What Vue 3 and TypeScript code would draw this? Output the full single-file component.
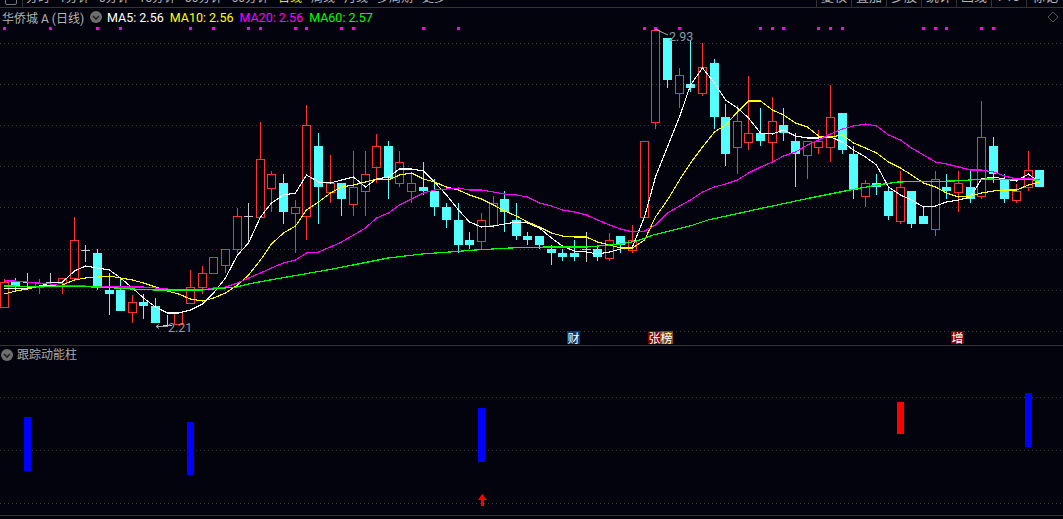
<script setup lang="ts">
type Candle = [number, number, number, number, number, 'r' | 'c' | 'd']

const periods = ['分时', '1分钟', '5分钟', '15分钟', '30分钟', '60分钟', '日线', '周线', '月线', '多周期', '更多']
const tools = ['复权', '叠加', '多股', '统计', '画线', 'F10', '标记']

const legend = [
  { text: 'MA5: 2.56', cls: 'white' },
  { text: 'MA10: 2.56', cls: 'yellow' },
  { text: 'MA20: 2.56', cls: 'magenta' },
  { text: 'MA60: 2.57', cls: 'green' },
]

// [column, high, top of body (cross bar for doji), bottom of body, low, kind]
const candles: Candle[] = [
  [4, 279, 282, 307, 307, 'r'], [15, 278, 282, 286, 290, 'c'], [27, 273, 282, 282, 286, 'd'],
  [39, 279, 283, 287, 294, 'r'], [50, 273, 282, 282, 286, 'd'], [62, 278, 278, 283, 294, 'r'],
  [74, 217, 240, 278, 278, 'r'], [85, 245, 250, 250, 261, 'd'], [97, 249, 253, 286, 290, 'c'],
  [109, 273, 290, 294, 315, 'c'], [120, 278, 290, 311, 311, 'c'], [132, 295, 302, 312, 323, 'r'],
  [143, 294, 302, 306, 319, 'c'], [155, 298, 306, 323, 323, 'c'], [167, 315, 325, 325, 325, 'd'],
  [178, 312, 312, 324, 324, 'r'], [190, 270, 287, 303, 303, 'r'], [202, 266, 273, 287, 294, 'r'],
  [213, 257, 257, 273, 273, 'r'], [225, 249, 249, 265, 273, 'r'], [237, 208, 216, 249, 253, 'r'],
  [248, 203, 216, 216, 243, 'd'], [260, 122, 159, 217, 217, 'r'], [271, 171, 174, 188, 212, 'r'],
  [283, 174, 183, 212, 224, 'c'], [295, 200, 207, 213, 253, 'r'], [306, 105, 125, 216, 240, 'r'],
  [318, 133, 146, 187, 224, 'c'], [330, 155, 183, 192, 203, 'r'], [341, 183, 183, 199, 216, 'c'],
  [353, 151, 187, 204, 216, 'r'], [365, 151, 174, 191, 216, 'r'], [376, 134, 146, 167, 183, 'r'],
  [388, 141, 146, 178, 199, 'c'], [399, 151, 162, 183, 187, 'r'], [411, 172, 183, 191, 203, 'r'],
  [423, 162, 187, 191, 195, 'c'], [434, 179, 191, 207, 216, 'c'], [446, 203, 207, 220, 228, 'c'],
  [458, 203, 220, 245, 253, 'c'], [469, 232, 240, 245, 249, 'c'], [481, 213, 220, 241, 249, 'r'],
  [493, 196, 203, 225, 228, 'r'], [504, 191, 199, 212, 232, 'c'], [516, 203, 220, 236, 240, 'c'],
  [527, 232, 236, 240, 245, 'c'], [539, 236, 236, 245, 249, 'c'], [551, 245, 249, 253, 265, 'c'],
  [562, 249, 253, 257, 261, 'c'], [574, 240, 253, 257, 261, 'c'], [586, 232, 249, 249, 261, 'd'],
  [597, 245, 249, 257, 261, 'c'], [609, 233, 240, 258, 261, 'r'], [620, 236, 236, 245, 253, 'c'],
  [632, 225, 240, 250, 253, 'r'], [644, 141, 141, 217, 217, 'r'], [655, 30, 30, 122, 129, 'r'],
  [667, 38, 38, 80, 88, 'c'], [679, 68, 75, 93, 108, 'r'], [690, 40, 84, 88, 92, 'c'],
  [702, 43, 67, 93, 96, 'r'], [714, 59, 63, 117, 129, 'c'], [725, 104, 117, 154, 166, 'c'],
  [737, 105, 121, 147, 174, 'r'], [748, 76, 133, 142, 150, 'r'], [760, 108, 133, 141, 146, 'c'],
  [772, 97, 121, 142, 162, 'r'], [783, 108, 125, 133, 141, 'c'], [795, 133, 141, 154, 187, 'c'],
  [807, 141, 141, 155, 179, 'r'], [818, 130, 141, 147, 154, 'r'], [830, 85, 117, 147, 162, 'r'],
  [842, 113, 113, 150, 154, 'c'], [853, 146, 154, 190, 199, 'c'], [865, 180, 183, 196, 207, 'r'],
  [876, 174, 183, 187, 195, 'c'], [888, 187, 191, 216, 220, 'c'], [900, 171, 187, 221, 224, 'r'],
  [911, 191, 191, 224, 228, 'c'], [923, 207, 216, 224, 224, 'c'], [935, 171, 179, 229, 236, 'r'],
  [946, 174, 187, 191, 199, 'c'], [958, 171, 183, 192, 212, 'r'], [970, 171, 187, 199, 203, 'c'],
  [981, 101, 137, 196, 199, 'r'], [993, 137, 146, 174, 183, 'c'], [1004, 174, 179, 199, 203, 'c'],
  [1016, 184, 191, 200, 203, 'r'], [1028, 151, 170, 187, 191, 'r'], [1039, 170, 170, 187, 187, 'c'],
]

const ma5 = [288,289,288,286,283,282,271,266,268,270,278,288,298,307,313,313,310,304,293,278,255,243,217,203,195,193,175,182,183,180,177,187,179,177,169,169,171,182,195,210,222,227,226,224,222,223,228,238,246,251,252,254,252,249,247,217,177,147,117,85,68,83,100,108,118,133,134,130,136,138,138,137,142,150,157,165,187,195,200,207,206,202,200,197,179,177,179,181,174,183]
const ma10 = [294,291,289,286,286,285,280,278,277,276,278,280,283,287,291,294,299,301,298,293,285,275,260,244,233,226,210,202,193,187,185,182,179,180,175,173,179,182,187,190,195,199,205,211,216,222,227,233,236,237,237,242,245,248,248,240,217,200,180,163,147,132,125,112,101,101,110,115,123,127,136,137,135,143,148,153,162,168,175,183,187,193,197,196,193,191,190,190,185,182]
const ma20 = [281,281,282,283,284,286,286,286,287,287,287,287,287,288,289,290,290,290,288,287,283,278,273,268,263,260,253,252,247,242,235,228,218,213,205,199,193,190,189,188,190,190,192,194,195,197,203,206,210,212,215,220,225,229,232,231,225,213,206,200,192,187,184,180,173,167,162,156,152,145,140,134,129,126,124,126,135,140,148,155,162,164,167,170,170,172,176,179,178,180]

const line = (values: number[]) => values.map((y, i) => `${candles[i][0] + 0.5},${y}`).join(' ')
const maLines = [
  { points: line(ma5), color: '#ffffff', width: 1.1 },
  { points: line(ma10), color: '#ffff00', width: 1.1 },
  { points: line(ma20), color: '#ff00ff', width: 1.1 },
  {
    points:
      '4,286 100,287 132,289 155,290 202,290 213,289 225,288 237,287 248,284 270,280 327,270 353,265 388,258 422,254 450,252 475,250 510,248 547,247 587,247 620,244 637,241 653,235 690,226 708,220 763,208 810,198 850,190 877,185 898,182 953,181 987,179 1038,180',
    color: '#00ff00',
    width: 1.2,
  },
]

const marks = [3, 49, 96, 119, 189, 212, 247, 259, 294, 305, 340, 352, 422, 457, 643, 654, 678, 759, 771, 782, 817, 829, 841, 922, 934, 945, 980, 992]
const mainGrid = [43, 84, 125, 166, 207, 249, 290, 331]
const subGrid = [397, 450, 503]
const bars = [
  { x: 24, y: 417, h: 54, color: '#0000ff' },
  { x: 187, y: 422, h: 53, color: '#0000ff' },
  { x: 478, y: 408, h: 54, color: '#0000ff' },
  { x: 897, y: 402, h: 32, color: '#ff0000' },
  { x: 1025, y: 393, h: 54, color: '#0000ff' },
]
</script>

<template>
  <div class="screen">
    <header class="toolbar">
      <div class="home"><span class="home-box"></span></div>
      <nav class="periods">
        <span v-for="p in periods" :key="p" :class="{ active: p === '日线' }">{{ p }}</span>
      </nav>
      <nav class="tools">
        <span v-for="t in tools" :key="t">{{ t }}</span>
      </nav>
    </header>

    <section class="main-pane">
      <svg class="canvas" viewBox="0 8 1063 337" width="1063" height="337">
        <line
          v-for="y in mainGrid" :key="y" x1="0" x2="1063" :y1="y + 0.5" :y2="y + 0.5"
          class="grid"
        />
        <rect v-for="x in marks" :key="x" :x="x" y="27" width="3" height="3" fill="#ff00ff" />
        <g v-for="c in candles" :key="c[0]" shape-rendering="crispEdges">
          <template v-if="c[5] === 'd'">
            <rect :x="c[0]" :y="c[1]" width="1" :height="c[4] - c[1] + 1" fill="#c8c8c8" />
            <rect :x="c[0] - 4" :y="c[2]" width="9" height="1" fill="#c8c8c8" />
          </template>
          <template v-else-if="c[5] === 'r'">
            <rect :x="c[0]" :y="c[1]" width="1" :height="c[2] - c[1]" fill="#ff3232" />
            <rect :x="c[0]" :y="c[3]" width="1" :height="c[4] - c[3]" fill="#ff3232" />
            <rect
              :x="c[0] - 3.5" :y="c[2] + 0.5" width="8" :height="c[3] - c[2]"
              fill="none" stroke="#ff3232"
            />
          </template>
          <template v-else>
            <rect :x="c[0]" :y="c[1]" width="1" :height="c[4] - c[1]" fill="#54ffff" />
            <rect :x="c[0] - 4" :y="c[2]" width="9" :height="c[3] - c[2]" fill="#54ffff" />
          </template>
        </g>
        <polyline
          v-for="m in maLines" :key="m.color" :points="m.points" :stroke="m.color"
          :stroke-width="m.width" fill="none" shape-rendering="crispEdges"
        />
        <path d="M168 326.5H156M156 326.5l3-2M156 326.5l3 2" class="leader" />
        <text x="168" y="332" class="price">2.21</text>
        <path d="M655 30.5l2-1.5 2 1.5M657 30l11 5" class="leader" />
        <text x="669" y="41" class="price">2.93</text>
        <path d="M1053 12l5 5-5 5-5-5z" fill="none" stroke="#555" />
      </svg>

      <div class="legend">
        <span class="title">华侨城 A (日线)</span>
        <span class="chevron">
          <svg viewBox="0 0 12 12" width="12" height="12">
            <path d="M3 5l3 3 3-3" fill="none" stroke="#222" stroke-width="1.6" />
          </svg>
        </span>
        <span v-for="l in legend" :key="l.text" class="ma" :class="l.cls">{{ l.text }}</span>
      </div>

      <span class="badge blue cai">财</span>
      <span class="badge red zhang">张</span>
      <span class="badge amber bang">榜</span>
      <span class="badge red zeng">增</span>
    </section>

    <section class="sub-pane">
      <svg class="canvas" viewBox="0 346 1063 169" width="1063" height="169">
        <line
          v-for="y in subGrid" :key="y" x1="0" x2="1063" :y1="y + 0.5" :y2="y + 0.5"
          class="grid"
        />
        <rect
          v-for="b in bars" :key="b.x" :x="b.x" :y="b.y" width="7" :height="b.h" :fill="b.color"
        />
        <path d="M482 494l5 6h-3v6h-3v-6h-3z" fill="#ff0000" />
      </svg>
      <div class="sub-title">
        <span class="chevron">
          <svg viewBox="0 0 12 12" width="12" height="12">
            <path d="M3 5l3 3 3-3" fill="none" stroke="#222" stroke-width="1.6" />
          </svg>
        </span>
        <span>跟踪动能柱</span>
      </div>
    </section>
  </div>
</template>

<style scoped>
.screen {
  width: 1063px;
  height: 519px;
  overflow: hidden;
  display: flex;
  flex-direction: column;
  background: #03030d;
  font-family: Roboto, "Noto Sans CJK SC", sans-serif;
  color: #b4b4b4;
}
.toolbar {
  flex: none;
  height: 7px;
  display: flex;
  overflow: hidden;
  border-bottom: 1px solid #333;
  font-size: 13px;
  line-height: 16px;
}
.home {
  width: 22px;
  flex: none;
  border-right: 1px solid #333;
  display: flex;
  justify-content: center;
}
.home-box {
  width: 10px;
  height: 11px;
  margin-top: -8px;
  border: 1px solid #777;
  border-radius: 2px;
}
.periods {
  flex: 1;
  display: flex;
  gap: 9px;
  padding-left: 3px;
  margin-top: -10px;
  font-size: 12px;
}
.periods .active {
  color: #e6e600;
}
.tools {
  display: flex;
  margin-top: -11px;
}
.tools span {
  width: 35px;
  text-align: center;
  border-left: 1px solid #333;
  box-sizing: border-box;
  height: 30px;
}
.tools span:last-child {
  width: 37px;
}
.main-pane {
  position: relative;
  flex: none;
  height: 337px;
  border-bottom: 1px solid #333;
}
.canvas {
  display: block;
}
.grid {
  stroke: #3a3a3a;
  stroke-width: 1;
  stroke-dasharray: 1 3;
  shape-rendering: crispEdges;
}
.leader {
  fill: none;
  stroke: #a8a8a8;
  stroke-width: 1;
}
.price {
  fill: #8b98a5;
  font-size: 12.5px;
  font-family: Roboto, sans-serif;
}
.legend {
  position: absolute;
  left: 2px;
  top: 0;
  height: 18px;
  display: flex;
  align-items: center;
  gap: 5px;
  font-size: 12.5px;
  white-space: nowrap;
}
.title {
  width: 83px;
  font-size: 12px;
  color: #b4b4b4;
}
.chevron {
  width: 12px;
  height: 12px;
  border-radius: 50%;
  background: #6e6e6e;
  display: block;
  flex: none;
}
.chevron svg {
  display: block;
}
.ma + .ma {
  margin-left: 1px;
}
.white {
  color: #fff;
}
.yellow {
  color: #ff0;
}
.magenta {
  color: #f0f;
}
.green {
  color: #0f0;
}
.badge {
  position: absolute;
  top: 323px;
  width: 13px;
  height: 13px;
  font-size: 12px;
  line-height: 13px;
  text-align: center;
  color: #fff;
  font-family: "Noto Sans CJK SC", sans-serif;
}
.blue {
  background: #0a3c6e;
}
.red {
  background: #7d0000;
}
.amber {
  background: #8c4600;
}
.cai {
  left: 567px;
}
.zhang {
  left: 648px;
}
.bang {
  left: 660px;
}
.zeng {
  left: 951px;
}
.sub-pane {
  position: relative;
  flex: none;
  height: 169px;
  border-bottom: 1px solid #333;
}
.sub-title {
  position: absolute;
  left: 1px;
  top: 2px;
  display: flex;
  align-items: center;
  gap: 4px;
  font-size: 12px;
  line-height: 14px;
  color: #aaa;
}
</style>
